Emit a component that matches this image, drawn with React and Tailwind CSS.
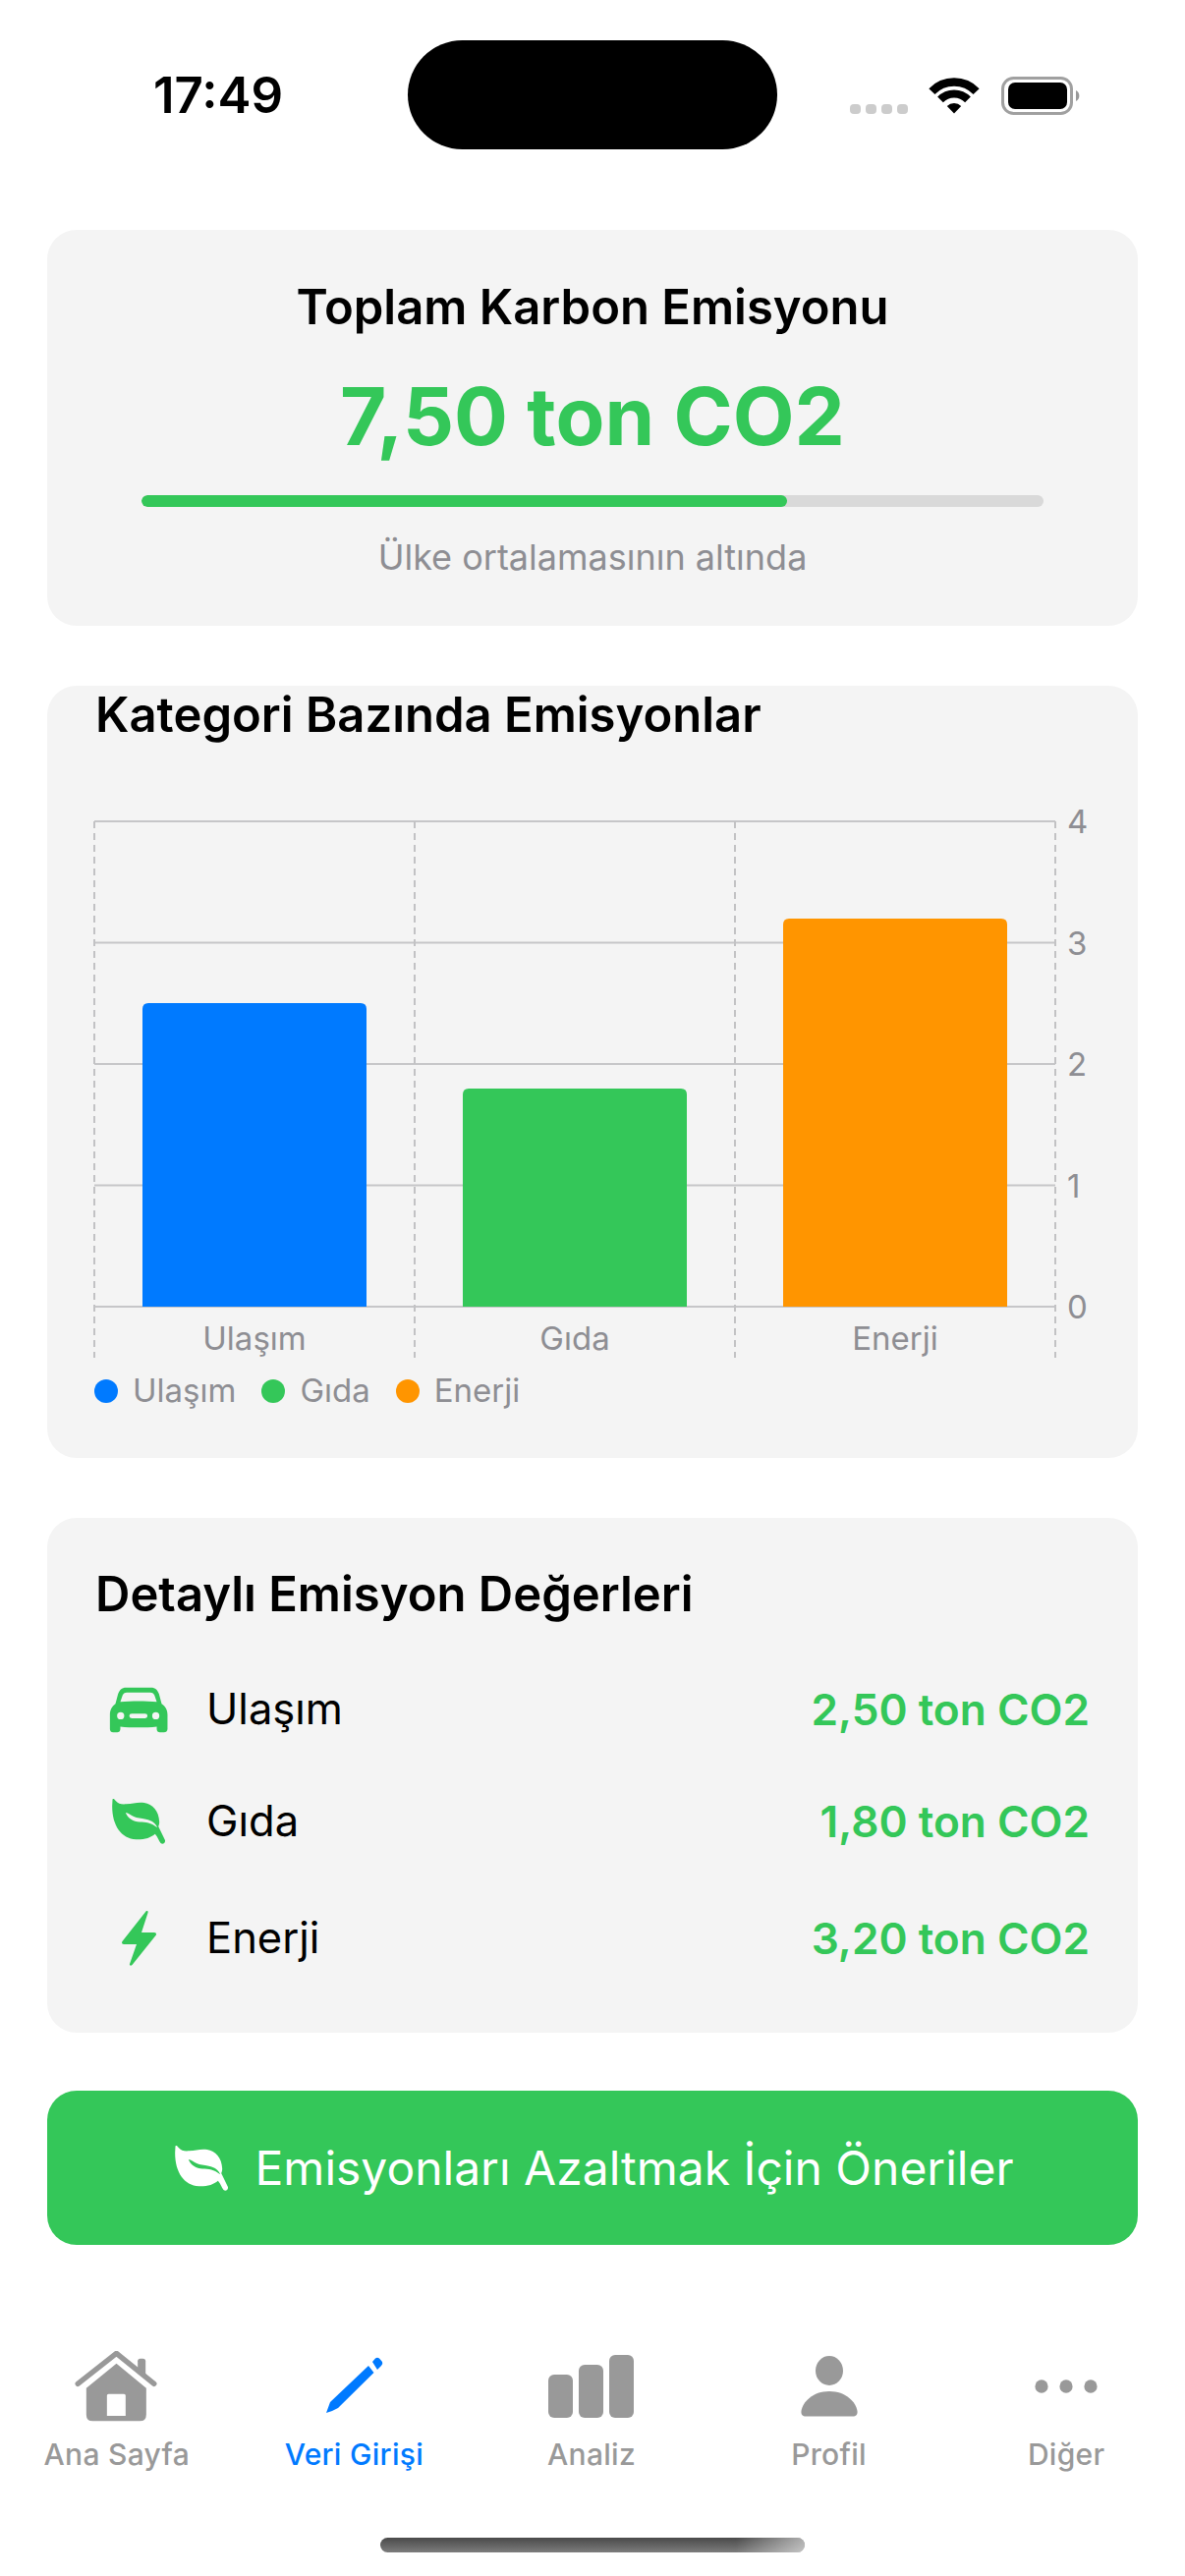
const LEAF = "M28 20 C30 15 33 18 37 23 C46 34 56 35 70 34 C90 33 105 27 125 30 C150 34 170 55 171 88 C171 94 170 98 168 102 L188 143 C191 152 182 159 175 153 C169 146 167 135 158 125 C145 136 125 143 100 142 C55 140 27 100 27 40 Z M68 60 C72 70 80 81 97 86 C115 90 135 87 150 96 C156 100 161 103 165 106 C160 92 148 84 130 80 C115 77 103 77 93 72 C82 67 77 61 68 60 Z";

const Leaf = ({ className, fill }) => (
  <svg viewBox="27 18 161 138" className={className}><path d={LEAF} fill={fill} fillRule="evenodd" /></svg>
);

const Car = () => (
  <svg viewBox="18 20 180 142" className="w-[60px] h-[47px]">
    <path fill="#34c759" fillRule="evenodd" d="M70 22 H146 C160 22 167 30 171 42 L179 72 C190 80 197 90 197 105 V150 C197 156 192 160 186 160 H174 C168 160 164 156 164 150 V142 C130 146 86 146 52 142 V150 C52 156 48 160 42 160 H30 C24 160 20 156 20 150 V105 C20 90 27 80 37 72 L45 42 C49 30 56 22 70 22 Z M52 66 L59 46 C61 40 65 37 72 37 H144 C151 37 155 40 157 46 L164 66 C130 63 86 63 52 66 Z M53 98 A11 11 0 1 0 53 120 A11 11 0 1 0 53 98 Z M161 98 A11 11 0 1 0 161 120 A11 11 0 1 0 161 98 Z M87 102 H128 A7.5 7.5 0 0 1 128 117 H87 A7.5 7.5 0 0 1 87 102 Z" />
  </svg>
);

const Bolt = () => (
  <svg viewBox="0 0 35 56" className="w-[35px] h-[56px]">
    <path fill="#34c759" d="M24.5 0.5 C26 -0.5 27 0.5 26.5 2 L20 22 H33 C35 22 35.5 24 34.5 25 L10.5 55 C9 56.5 7.5 55.5 8 54 L15 34 H2 C0 34 -0.5 32 0.7 30.7 Z" />
  </svg>
);

const Home = () => (
  <svg viewBox="20 24 254 216" className="w-[85px] h-[72px]">
    <path fill="#999999" d="M212 55 Q212 47 220 47 H228 Q236 47 236 55 V112 L212 88 Z" />
    <path fill="none" stroke="#999999" strokeWidth="16" strokeLinecap="round" strokeLinejoin="round" d="M29 124 L147 31 L262 124" />
    <path fill="#999999" fillRule="evenodd" d="M147 62 L238 137 V218 Q238 238 218 238 H75 Q55 238 55 218 V137 Z M123 155 Q118 155 118 160 V222 H175 V160 Q175 155 170 155 Z" />
  </svg>
);

const Pencil = () => (
  <svg viewBox="0 0 64 64" className="w-[64px] h-[64px] ml-[2px]">
    <path fill="#007aff" d="M3 59 L7 48 L46 11 L51.5 18 L15 54 Q10 57 3 59 Z M50 7 L53 3.5 Q55 2 57 3.5 L60 7 Q61 9 59 11 L55 15 Z" />
  </svg>
);

const Bars = () => (
  <svg viewBox="0 0 87 64" className="w-[87px] h-[64px]">
    <rect x="0" y="20" width="25" height="44" rx="6" fill="#999999" />
    <rect x="31" y="10" width="25" height="54" rx="6" fill="#999999" />
    <rect x="62" y="0" width="25" height="64" rx="6" fill="#999999" />
  </svg>
);

const Person = () => (
  <svg viewBox="0 0 58 62" className="w-[58px] h-[62px]">
    <ellipse cx="29" cy="15" rx="14" ry="15" fill="#999999" />
    <path fill="#999999" d="M29 36 C46 36 56 47 57.5 56 C58 60 56 61.5 53 61.5 H5 C2 61.5 0 60 0.5 56 C2 47 12 36 29 36 Z" />
  </svg>
);

const Dots = () => (
  <svg viewBox="0 0 64 14" className="w-[64px] h-[14px]">
    <ellipse cx="7" cy="7" rx="6.6" ry="6.8" fill="#999999" />
    <ellipse cx="32" cy="7" rx="6.6" ry="6.8" fill="#999999" />
    <ellipse cx="57" cy="7" rx="6.6" ry="6.8" fill="#999999" />
  </svg>
);

const Wifi = () => (
  <svg viewBox="0 0 52 37" className="w-[52px] h-[37px]">
    <path d="M3.4 14.1 A31.5 31.5 0 0 1 48.6 14.1" fill="none" stroke="#000" strokeWidth="8.5" />
    <path d="M12 22.4 A19.5 19.5 0 0 1 40 22.4" fill="none" stroke="#000" strokeWidth="8" />
    <path d="M26 36.5 L18.8 29 A10 10 0 0 1 33.2 29 Z" fill="#000" />
  </svg>
);

const Battery = () => (
  <svg viewBox="0 0 81 39" className="w-[81px] h-[39px]">
    <rect x="1.5" y="1.5" width="70" height="36" rx="11" fill="none" stroke="#a0a0a0" strokeWidth="3" />
    <rect x="7" y="6" width="60" height="27" rx="7" fill="#000" />
    <path d="M76 14 C80.5 16 80.5 23 76 25 Z" fill="#999999" />
  </svg>
);

const xTicks = [96, 422, 748, 1074];
const yTicks = [[836, "4"], [959.5, "3"], [1083, "2"], [1206.5, "1"], [1330, "0"]];
const bars = [
  { x: 145, y: 1021, c: "#007aff", l: "Ulaşım", cx: 259 },
  { x: 471, y: 1108, c: "#34c759", l: "Gıda", cx: 585 },
  { x: 797, y: 935, c: "#ff9500", l: "Enerji", cx: 911 },
];

const Chart = () => (
  <svg viewBox="48 759 1110 637" className="w-[1110px] h-[637px] block">
    {yTicks.map(([y]) => (
      <line key={y} x1="96" x2="1074" y1={y} y2={y} stroke="#c6c6c8" strokeWidth="2" />
    ))}
    {xTicks.map((x) => (
      <line key={x} x1={x} x2={x} y1="836" y2="1382" stroke="#c2c2c4" strokeWidth="2" strokeDasharray="7 5" />
    ))}
    {bars.map((b) => (
      <path key={b.x} fill={b.c} d={`M${b.x} 1330 V${b.y + 6} Q${b.x} ${b.y} ${b.x + 6} ${b.y} H${b.x + 222} Q${b.x + 228} ${b.y} ${b.x + 228} ${b.y + 6} V1330 Z`} />
    ))}
    {bars.map((b) => (
      <text key={b.l} x={b.cx} y="1374" textAnchor="middle" fontSize="33" fill="#8e8e93">{b.l}</text>
    ))}
    {yTicks.map(([y, t]) => (
      <text key={t} x="1086" y={y + 12} fontSize="33" fill="#8e8e93">{t}</text>
    ))}
  </svg>
);

const rows = [
  { icon: <Car />, name: "Ulaşım", value: "2,50 ton CO2", mt: "mt-[57px]" },
  { icon: <Leaf className="w-[54px] h-[46px]" fill="#34c759" />, name: "Gıda", value: "1,80 ton CO2", mt: "mt-[54px]" },
  { icon: <Bolt />, name: "Enerji", value: "3,20 ton CO2", mt: "mt-[59px]" },
];

const tabs = [
  { icon: <Home />, label: "Ana Sayfa" },
  { icon: <Pencil />, label: "Veri Girişi", active: true },
  { icon: <Bars />, label: "Analiz" },
  { icon: <Person />, label: "Profil" },
  { icon: <Dots />, label: "Diğer" },
];

export default function App() {
  return (
    <div className="w-[1206px] h-[2622px] bg-white overflow-hidden flex flex-col [font-family:Inter,sans-serif]">
      <div className="h-[234px] pt-[41px] shrink-0">
        <div className="h-[111px] flex items-center">
          <div className="w-[415px] pl-[156px] text-[51px] leading-[60px] font-semibold text-black">17:49</div>
          <div className="w-[376px] h-[111px] rounded-[56px] bg-black" />
          <div className="ml-[74px] mt-[29px] flex gap-[5px]">
            <div className="w-[11px] h-[10px] rounded-[4px] bg-[#cccccc]" />
            <div className="w-[11px] h-[10px] rounded-[4px] bg-[#cccccc]" />
            <div className="w-[11px] h-[10px] rounded-[4px] bg-[#cccccc]" />
            <div className="w-[11px] h-[10px] rounded-[4px] bg-[#cccccc]" />
          </div>
          <div className="ml-[21px] mt-[2px]"><Wifi /></div>
          <div className="ml-[22px] mt-[2px]"><Battery /></div>
        </div>
      </div>

      <div className="px-[48px] flex flex-col shrink-0">
        <div className="h-[403px] rounded-[30px] bg-[#f4f4f4] flex flex-col items-center pt-[49px]">
          <div className="text-[49px] leading-[60px] font-semibold text-black">Toplam Karbon Emisyonu</div>
          <div className="mt-[31px] text-[81.5px] leading-[100px] font-bold text-[#34c759]">7,50 ton CO2</div>
          <div className="mt-[30px] w-[918px] h-[12px] rounded-full bg-[#d9d9d9] overflow-hidden">
            <div className="w-[657px] h-full rounded-full bg-[#34c759]" />
          </div>
          <div className="mt-[29px] text-[36px] leading-[44px] text-[#8e8e93]">Ülke ortalamasının altında</div>
        </div>

        <div className="mt-[61px] h-[786px] rounded-[30px] bg-[#f4f4f4] overflow-hidden flex flex-col">
          <div className="h-[61px] pl-[49px] text-[49px] leading-[60px] font-semibold text-black">Kategori Bazında Emisyonlar</div>
          <Chart />
          <div className="pl-[48px] h-[40px] flex items-center text-[33px] text-[#8e8e93]">
            <span className="w-[24px] h-[24px] rounded-full bg-[#007aff]" />
            <span className="ml-[15px]">Ulaşım</span>
            <span className="ml-[26px] w-[24px] h-[24px] rounded-full bg-[#34c759]" />
            <span className="ml-[15px]">Gıda</span>
            <span className="ml-[26px] w-[24px] h-[24px] rounded-full bg-[#ff9500]" />
            <span className="ml-[15px]">Enerji</span>
          </div>
        </div>

        <div className="mt-[61px] h-[524px] rounded-[30px] bg-[#f4f4f4] pl-[49px] pr-[49px] pt-[48px]">
          <div className="text-[49px] leading-[60px] font-semibold text-black">Detaylı Emisyon Değerleri</div>
          {rows.map((r) => (
            <div key={r.name} className={`${r.mt} h-[60px] flex items-center`}>
              <div className="w-[88px] flex justify-center">{r.icon}</div>
              <div className="ml-[25px] text-[43.5px] text-black">{r.name}</div>
              <div className="ml-auto text-[44.2px] font-semibold text-[#34c759]">{r.value}</div>
            </div>
          ))}
        </div>

        <div className="mt-[59px] h-[157px] pl-[3px] rounded-[30px] bg-[#34c759] flex items-center justify-center gap-[28px]">
          <Leaf className="w-[54px] h-[46px]" fill="#ffffff" />
          <span className="text-[48px] text-white">Emisyonları Azaltmak İçin Öneriler</span>
        </div>
      </div>

      <div className="mt-[108px] w-[1208px] -ml-[2px] grid grid-cols-5 shrink-0">
        {tabs.map((t) => (
          <div key={t.label} className="flex flex-col items-center">
            <div className="h-[72px] flex items-center justify-center">{t.icon}</div>
            <div className={`mt-[13px] text-[30px] leading-[40px] font-medium tracking-[0.3px] ${t.active ? "text-[#007aff]" : "text-[#999999]"}`}>{t.label}</div>
          </div>
        ))}
      </div>

      <div className="relative overflow-hidden mt-[65px] mx-auto w-[432px] h-[15px] rounded-full bg-gradient-to-b from-[#4a4a4a] to-[#7d7d7d] shrink-0">
        <div className="absolute right-0 top-0 w-[70px] h-full bg-gradient-to-r from-transparent to-white/55" />
      </div>
    </div>
  );
}
